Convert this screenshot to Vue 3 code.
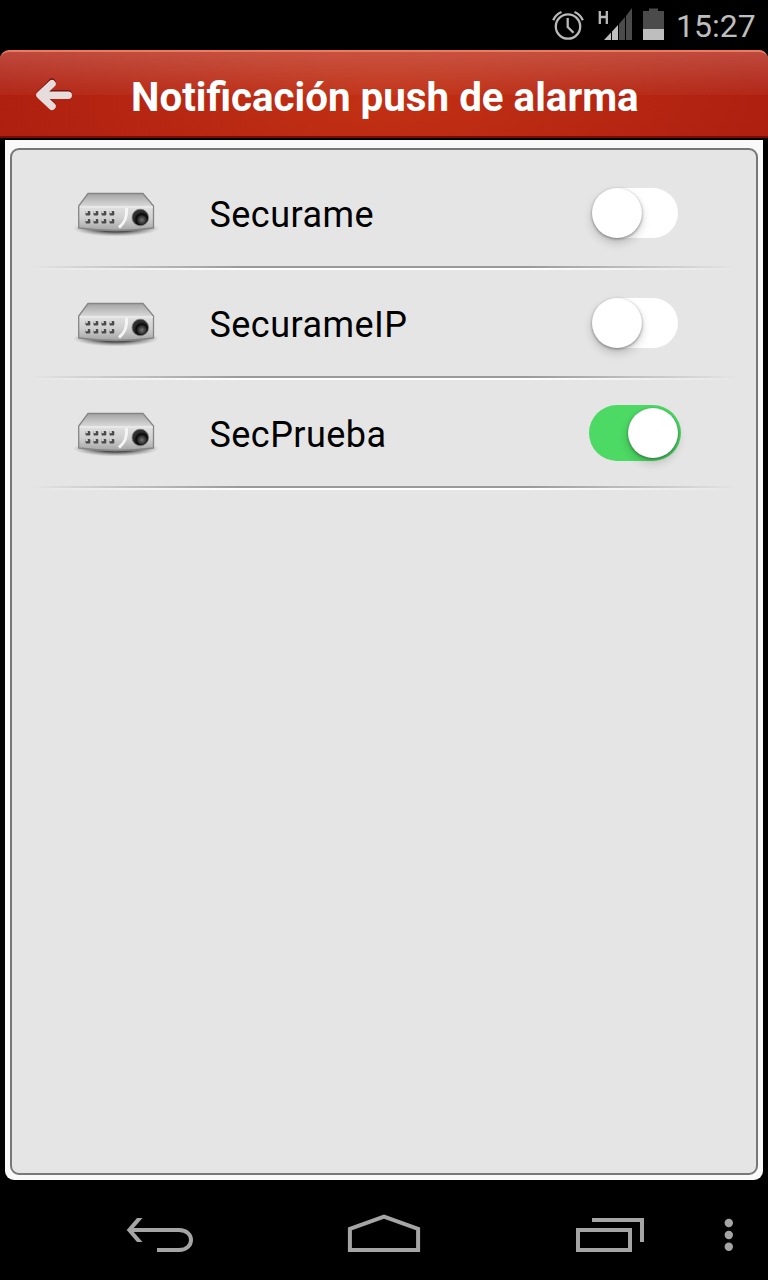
<script setup>
import { ref } from 'vue'

const devices = ref([
  { name: 'Securame', enabled: false },
  { name: 'SecurameIP', enabled: false },
  { name: 'SecPrueba', enabled: true }
])

const ledColumns = [86, 94, 102, 110]
const ledRows = [211, 219]

const toggle = (device) => {
  device.enabled = !device.enabled
}
</script>

<template>
  <div class="screen">
    <div class="status-bar">
      <svg class="status-icons" width="118" height="50" viewBox="550 0 118 50">
        <g fill="none" stroke="#b9b9b9" stroke-width="2.3">
          <circle cx="568" cy="26.500" r="12.200" />
          <path d="M567.700 18v9l5.800 5.800" />
          <path d="M553.200 20.300q2.500-6 8.300-8.300M582.800 20.300q-2.500-6-8.300-8.300" />
        </g>
        <path d="M599.800 11v13M606.800 11v13M599.800 17h7" fill="none" stroke="#b9b9b9" stroke-width="2.300" />
        <path d="M604 40l7-7.500V40zM612 31.500l6-6.500v15h-6z" fill="#bebebe" />
        <path d="M619 24l6-7v23h-6zM626 16l6-8v32h-6z" fill="#4b4b4b" />
        <path d="M643 11h6V8.500h9V11h6v18h-21z" fill="#4b4b4b" />
        <path d="M643 29h21v11h-21z" fill="#bebebe" />
      </svg>
      <span class="clock">15:27</span>
    </div>

    <header class="title-bar">
      <svg class="back" width="40" height="36" viewBox="34 76 40 36">
        <g fill="none" stroke-width="7.500" stroke-linecap="round" stroke-linejoin="round">
          <path d="M52 82.300L40.500 94 52 105.300M42 94h26" stroke="#6d0d08" />
          <path d="M52 83.800L40 95l12 11.300M42 95.300h26.200" stroke="#e6dcdc" />
        </g>
      </svg>
      <h1 class="title">Notificación push de alarma</h1>
    </header>

    <main class="content">
      <ul class="panel">
        <li v-for="device in devices" :key="device.name" class="device">
          <svg class="device-icon" width="88" height="56" viewBox="72 188 88 56">
            <defs>
              <linearGradient id="lid" x1="0" y1="0" x2="0" y2="1">
                <stop offset="0" stop-color="#a4a4a4" />
                <stop offset="1" stop-color="#dadada" />
              </linearGradient>
              <linearGradient id="front" x1="0" y1="0" x2="0" y2="1">
                <stop offset="0" stop-color="#e2e2e2" />
                <stop offset="0.500" stop-color="#cfcfcf" />
                <stop offset="1" stop-color="#a6a6a6" />
              </linearGradient>
              <radialGradient id="shade">
                <stop offset="0.450" stop-color="#333" stop-opacity="0.850" />
                <stop offset="1" stop-color="#777" stop-opacity="0" />
              </radialGradient>
              <radialGradient id="lens" cx="0.600" cy="0.650">
                <stop offset="0" stop-color="#737373" />
                <stop offset="0.450" stop-color="#343434" />
                <stop offset="0.700" stop-color="#080808" />
                <stop offset="1" stop-color="#303030" />
              </radialGradient>
            </defs>
            <ellipse cx="116" cy="228.500" rx="43" ry="8" fill="url(#shade)" />
            <path d="M88 193.500h55l10 13H79z" fill="url(#lid)" />
            <path d="M79 206.500h74.500v21.500q-37 5-74.500 0z" fill="url(#front)" />
            <path
              d="M88 193.500L78.700 206v22q37.500 5 74.800 0v-22l-10.500-12.500z"
              fill="none"
              stroke="#858585"
              stroke-width="1.300"
            />
            <path d="M80 207h73" stroke="#f0f0f0" />
            <path d="M126.500 208c1 10-2 15-7.500 19.500" fill="none" stroke="#f5f5f5" stroke-width="3" />
            <template v-for="y in ledRows" :key="y">
              <g v-for="x in ledColumns" :key="x">
                <rect :x="x - 0.500" :y="y" width="4.800" height="4.600" rx="1" fill="#4a4a4a" />
                <rect :x="x - 0.500" :y="y" width="2.400" height="2.200" rx="0.800" fill="#d8d8d8" />
              </g>
            </template>
            <circle cx="140.300" cy="217.500" r="8.300" fill="url(#lens)" stroke="#777" stroke-width="0.800" />
          </svg>
          <span class="device-name">{{ device.name }}</span>
          <button
            type="button"
            class="switch"
            :class="{ 'switch--on': device.enabled }"
            :aria-pressed="device.enabled"
            :aria-label="device.name"
            @click="toggle(device)"
          >
            <span class="knob"></span>
          </button>
        </li>
      </ul>
    </main>

    <nav class="nav-bar">
      <svg width="768" height="100" viewBox="0 1180 768 100">
        <g fill="none" stroke="#a5a5a5" stroke-width="4">
          <path d="M129 1230h50c16 0 16 20 0 20h-22" />
          <path d="M349.900 1250v-21.200l34.100-12.200 34.100 12.200V1250z" />
          <path d="M578 1230h52v20h-52z" />
          <path d="M592 1220h50v22" />
        </g>
        <path d="M137 1218h5.500l-10.500 12 10.500 12H137l-10.300-12z" fill="#a5a5a5" />
        <g fill="#a5a5a5">
          <circle cx="728.800" cy="1223" r="4.200" />
          <circle cx="728.800" cy="1235" r="4.200" />
          <circle cx="728.800" cy="1246.800" r="4.200" />
        </g>
      </svg>
    </nav>
  </div>
</template>

<style>
body {
  margin: 0;
  background: #000;
}
</style>

<style scoped>
.screen {
  display: flex;
  flex-direction: column;
  width: 768px;
  height: 1280px;
  overflow: hidden;
  background: #000;
  font-family: Roboto, "Noto Sans", sans-serif;
}

.status-bar {
  display: flex;
  align-items: center;
  flex: 0 0 50px;
  height: 50px;
  padding-left: 550px;
}

.status-icons {
  flex: none;
}

.clock {
  margin-left: 8px;
  padding-top: 1px;
  color: #bebebe;
  font-size: 32px;
  line-height: 48px;
}

.title-bar {
  display: flex;
  align-items: center;
  box-sizing: border-box;
  flex: 0 0 88px;
  padding-left: 34px;
  border-top: 2px solid #f27a5c;
  border-bottom: 2px solid #7c0a05;
  border-radius: 9px 9px 0 0;
  background:
    linear-gradient(rgba(255, 255, 255, 0.19), rgba(255, 255, 255, 0.03)) 0 0 / 100% 43px no-repeat,
    radial-gradient(ellipse 400px 150px at 50% 60%, #c23014, rgba(174, 31, 16, 0));
  background-color: #ae1f10;
}

.back {
  flex: none;
}

.title {
  margin: 7px 0 0 57px;
  color: #fff;
  font-size: 40.300px;
  font-weight: 700;
  line-height: 48px;
  white-space: nowrap;
}

.content {
  box-sizing: border-box;
  flex: 0 0 1040px;
  margin: 2px 5px 0;
  padding: 8px 5px 5px;
  border-radius: 0 0 9px 9px;
  background: #f9f9f9;
}

.panel {
  box-sizing: border-box;
  height: 1027px;
  margin: 0;
  padding: 10px 18px 0;
  border: 2px solid #777;
  border-radius: 9px;
  background: #e5e5e5;
  list-style: none;
}

.device {
  display: flex;
  align-items: center;
  box-sizing: border-box;
  height: 110px;
  padding: 0 57px 4px 42px;
  background:
    linear-gradient(90deg, rgba(153, 153, 153, 0), #999 30%, #999 70%, rgba(153, 153, 153, 0)) 0 106px / 100% 2px no-repeat,
    linear-gradient(90deg, rgba(255, 255, 255, 0), #fff 30%, #fff 70%, rgba(255, 255, 255, 0)) 0 108px / 100% 2px no-repeat;
}

.device-icon {
  flex: none;
  margin-top: 6px;
}

.device-name {
  flex: 1;
  margin-left: 49.500px;
  padding-top: 4px;
  color: #000;
  font-size: 36px;
  line-height: 44px;
  letter-spacing: 0.450px;
}

.switch {
  display: flex;
  align-items: center;
  box-sizing: border-box;
  flex: none;
  width: 86px;
  height: 50px;
  margin-right: 3px;
  padding: 0;
  border: 0;
  border-radius: 28px;
  background: #fff;
}

.knob {
  width: 50px;
  height: 50px;
  border-radius: 50%;
  background: #fff;
  box-shadow: 0 1px 3px rgba(0, 0, 0, 0.4), 0 5px 10px rgba(0, 0, 0, 0.18);
}

.switch--on {
  justify-content: flex-end;
  width: 92px;
  height: 56px;
  margin-right: 0;
  padding-right: 3px;
  background: #4cd964;
}
</style>
